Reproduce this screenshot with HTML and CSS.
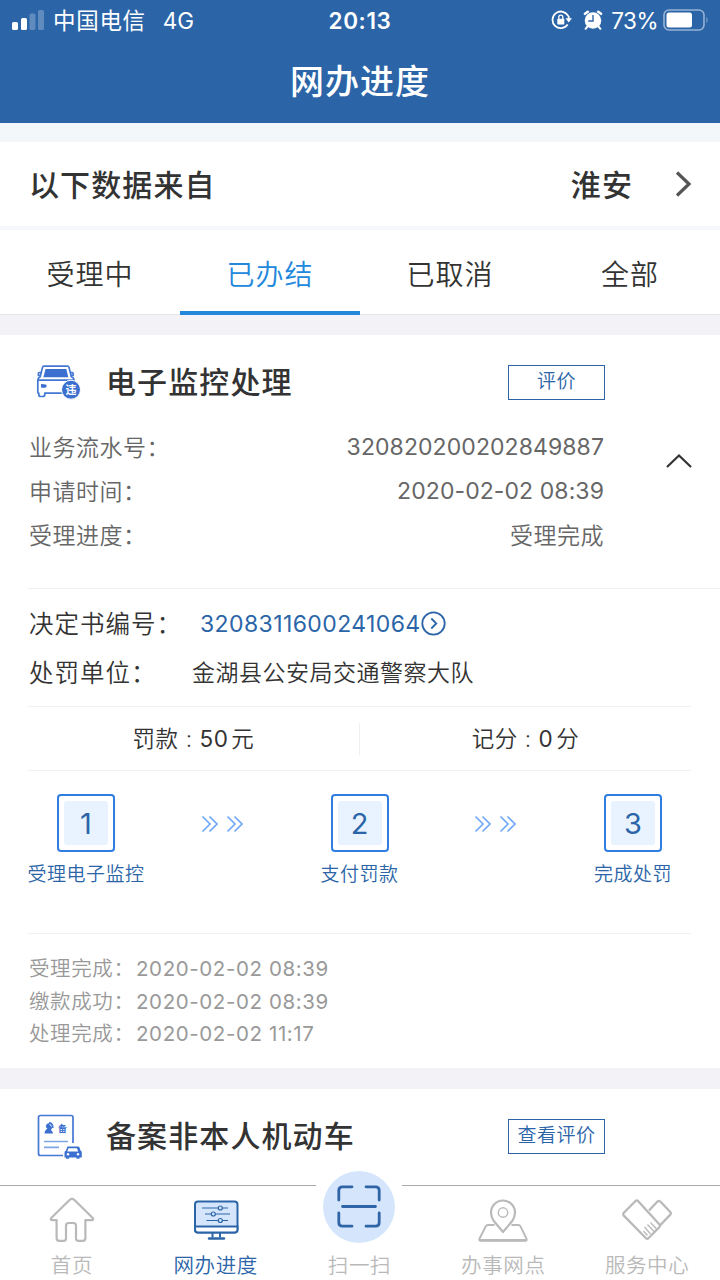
FILE: index.html
```html
<!DOCTYPE html>
<html lang="zh-CN">

<head>
  <meta charset="UTF-8" />
  <meta name="viewport" content="width=device-width, initial-scale=1.0" />
  <title>网办进度</title>
  <link rel="stylesheet" href="styles.css">
</head>

<body>
  <header class="header">
    <div class="status-bar">
      <div class="status-left">
        <svg class="signal" width="32" height="20" viewBox="0 0 32 20" fill="#fff">
          <rect x="0" y="12" width="6" height="8" rx="1.6" />
          <rect x="9" y="8" width="6" height="12" rx="1.6" />
          <rect x="17.5" y="3.500" width="6" height="16.500" rx="1.6" opacity=".25" />
          <rect x="26" y="0" width="6" height="20" rx="1.6" opacity=".25" />
        </svg>
        <span class="carrier">中国电信</span>
        <span class="network">4G</span>
      </div>
      <div class="clock">20:13</div>
      <div class="status-right">
        <svg width="22" height="20" viewBox="0 0 22 20" fill="none" stroke="#fff" stroke-width="1.8">
          <path d="M17.300 6.200A8.300 8.300 0 1 0 16.700 14.500" />
          <path d="M17.700 6v3.500" />
          <path d="M14.500 8.300h6.500l-3.300 4.200z" fill="#fff" stroke="none" />
          <rect x="6.300" y="8.700" width="7" height="5.800" rx=".8" fill="#fff" stroke="none" />
          <path d="M7.800 9V7.200a2 2 0 0 1 4 0V9" stroke-width="1.300" />
        </svg>
        <svg class="alarm" width="20" height="20" viewBox="0 0 20 20" fill="#fff">
          <circle cx="10" cy="10.500" r="8.300" />
          <path d="M2 3.800 4.800 1.800M15.200 1.800 18 3.800" stroke="#fff" stroke-width="2.600" stroke-linecap="round" />
          <path d="M4.500 16.500 2.600 18.800M15.500 16.500l1.900 2.300" stroke="#fff" stroke-width="2" stroke-linecap="round" />
          <path d="M10 5v6H5.300" fill="none" stroke="#2b65a8" stroke-width="1.400" />
        </svg>
        <span class="percent">73%</span>
        <svg class="battery" width="46" height="22" viewBox="0 0 46 22">
          <rect x="1" y="1" width="40" height="20" rx="5" fill="none" stroke="#fff" stroke-width="1.600" opacity=".5" />
          <rect x="3.500" y="3.500" width="25.500" height="15" rx="2.500" fill="#fff" />
          <path d="M43.500 7.500q2 3.500 0 7z" fill="#fff" opacity=".5" />
        </svg>
      </div>
    </div>
    <h1 class="title">网办进度</h1>
  </header>

  <main class="main">
    <div class="source">
      <span>以下数据来自</span>
      <span class="city">淮安</span>
      <svg width="17" height="28" viewBox="0 0 17 28" fill="none" stroke="#555" stroke-width="3.200">
        <path d="M2 2.500 14 14 2 25.500" />
      </svg>
    </div>

    <nav class="tabs">
      <a class="tab">受理中</a>
      <a class="tab active">已办结</a>
      <a class="tab">已取消</a>
      <a class="tab">全部</a>
    </nav>

    <section class="card">
      <div class="card-head">
        <svg class="card-icon" width="46" height="38" viewBox="0 0 46 38" fill="none" stroke="#4478d4" stroke-width="1.700" stroke-linejoin="round">
          <path d="M8 3.200h23.500q1.200 0 1.500 1.200l2.400 9.300q2.600.8 2.600 3.500v5M8 3.200q-1.200 0-1.500 1.200L4.200 13.700Q1.800 14.700 1.800 17.700v11.500q0 1 1 1V31.500q0 2 2 2h2q2 0 2-2v-1.300H28" />
          <path d="M5.500 9.500H3.200q-.8 0-.8.8v2.200h2.300M34 9.500h2.300q.8 0 .8.800v2.200h-2.300M2 17.200h35.500" />
          <path d="M9.500 6h20.800l2 8.200H7.400z" fill="#3b70d0" stroke="none" />
          <path d="M5 21l4.700.6q1 .2 1 1.200 0 2-2 2H6q-1 0-1-1z" fill="#3b70d0" stroke="none" />
          <circle cx="35" cy="26.700" r="9.500" fill="#3b70d0" stroke="#fff" stroke-width="1" />
          <text class="badge-text" x="35" y="30.700">违</text>
        </svg>
        <h2 class="card-title">电子监控处理</h2>
        <button class="btn">评价</button>
      </div>

      <div class="summary">
        <dl class="info">
          <div class="info-row"><dt>业务流水号：</dt><dd class="number">320820200202849887</dd></div>
          <div class="info-row"><dt>申请时间：</dt><dd class="number">2020-02-02 08:39</dd></div>
          <div class="info-row"><dt>受理进度：</dt><dd>受理完成</dd></div>
        </dl>
        <svg class="collapse" width="28" height="16" viewBox="0 0 28 16" fill="none" stroke="#333" stroke-width="2.200">
          <path d="M2 14 14 2.500 26 14" />
        </svg>
      </div>

      <div class="detail">
        <div class="detail-row">
          <span class="detail-label">决定书编号：</span>
          <a class="doc-link">3208311600241064</a>
          <svg width="25" height="25" viewBox="0 0 25 25" fill="none" stroke="#2b65a8" stroke-width="1.800">
            <circle cx="12.500" cy="12.500" r="11.200" />
            <path d="M10.300 7.500l5 5-5 5" />
          </svg>
        </div>
        <div class="detail-row">
          <span class="detail-label">处罚单位：</span>
          <span class="unit">金湖县公安局交通警察大队</span>
        </div>
      </div>

      <div class="penalty">
        <div class="penalty-item">罚款<i>:</i><b>50</b>元</div>
        <div class="penalty-item">记分<i>:</i><b>0</b>分</div>
      </div>

      <div class="steps">
        <div class="step">
          <div class="step-box"><span>1</span></div>
          <div class="step-name">受理电子监控</div>
        </div>
        <svg class="arrows" width="44" height="18" viewBox="0 0 44 18" fill="none" stroke="#6fa8f5" stroke-width="1.700">
          <path d="M1.500 1.500 9 9l-7.500 7.500M8.500 1.500 16 9l-7.500 7.500M26.500 1.500 34 9l-7.500 7.500M33.500 1.500 41 9l-7.500 7.500" />
        </svg>
        <div class="step">
          <div class="step-box"><span>2</span></div>
          <div class="step-name">支付罚款</div>
        </div>
        <svg class="arrows" width="44" height="18" viewBox="0 0 44 18" fill="none" stroke="#6fa8f5" stroke-width="1.700">
          <path d="M1.500 1.500 9 9l-7.500 7.500M8.500 1.500 16 9l-7.500 7.500M26.500 1.500 34 9l-7.500 7.500M33.500 1.500 41 9l-7.500 7.500" />
        </svg>
        <div class="step">
          <div class="step-box"><span>3</span></div>
          <div class="step-name">完成处罚</div>
        </div>
      </div>

      <ul class="logs">
        <li><span>受理完成：</span>2020-02-02 08:39</li>
        <li><span>缴款成功：</span>2020-02-02 08:39</li>
        <li><span>处理完成：</span>2020-02-02 11:17</li>
      </ul>
    </section>

    <section class="card">
      <div class="card-head">
        <svg class="card-icon" width="46" height="46" viewBox="0 0 46 46" fill="none" stroke="#4478d4" stroke-width="1.700">
          <path d="M27 42.500H4.500q-2 0-2-2v-36q0-2 2-2h30.500q2 0 2 2V30" />
          <path d="M8.500 20.500q.5-3.500 2.800-5l-1.500-1.500q0-3 2.500-4l4.200 5q-1.500 1-1.500 2 2 1.500 2 3.500z" fill="#3b70d0" stroke="none" />
          <path d="M13 10q3.500 0 3.800 5" stroke-width="1.800" />
          <text class="doc-text" x="26.500" y="18.500">备</text>
          <path d="M8 28.500h24M8 34.300h15" stroke="#7fa6e6" />
          <path d="M31.500 33.500h10.600q1.200 0 1.500 1.200l.9 2.800q1.300.6 1.300 2.300v4.700h-2.300v1.300h-3v-1.300h-7.400v1.300h-3v-1.300h-1.600v-4.700q0-1.700 1.600-2.300l.9-2.800q.3-1.200.5-1.200z" fill="#3b70d0" stroke="none" />
          <path d="M32.500 35.200h8.500l1.200 3.200H31.300z" fill="#fff" stroke="none" />
          <circle cx="32" cy="41.200" r="1.200" fill="#fff" stroke="none" />
          <circle cx="42" cy="41.200" r="1.200" fill="#fff" stroke="none" />
        </svg>
        <h2 class="card-title">备案非本人机动车</h2>
        <button class="btn">查看评价</button>
      </div>
    </section>
  </main>

  <footer class="tabbar">
    <a class="tabbar-item">
      <svg width="48" height="48" viewBox="0 0 48 48" fill="none" stroke="#b9b9b9" stroke-width="2.200" stroke-linejoin="round">
        <path d="M24 2.800q-1.200 0-2.200 1L3 22.300q-.8 1.500 1 1.800h4.600V42q0 2.800 2.700 2.800h4.400q2.300 0 2.300-2.300V29.600q0-2.600 2.600-2.600h4.800q2.600 0 2.600 2.600v12.900q0 2.300 2.300 2.300h4.400q2.700 0 2.700-2.800V24.100H44q1.800-.3 1-1.800L26.200 3.800q-1-1-2.200-1z" />
      </svg>
      <span>首页</span>
    </a>
    <a class="tabbar-item active">
      <svg width="48" height="48" viewBox="0 0 48 48" fill="none" stroke="#2b65a8" stroke-width="2">
        <rect x="3" y="5.500" width="42.500" height="31" rx="3" fill="#d5e6fc" />
        <path d="M3 30.500v3q0 3 3 3h36.500q3 0 3-3v-3z" fill="#fff" />
        <path d="M20.500 37v4.500M28 37v4.500" />
        <path d="M17 42.500h15" stroke-width="2.400" stroke-linecap="round" />
        <path d="M10 12h26M13 18h25M14.500 24.500H36" stroke-width="1.200" />
        <g fill="#d5e6fc" stroke-width="1.200">
          <circle cx="28.300" cy="12" r="2" />
          <circle cx="21.300" cy="18" r="2" />
          <circle cx="28.300" cy="24.500" r="2" />
        </g>
      </svg>
      <span>网办进度</span>
    </a>
    <a class="tabbar-item">
      <div class="scan">
        <svg width="44" height="44" viewBox="0 0 44 44" fill="none" stroke="#2f64a6" stroke-width="2.800" stroke-linecap="round">
          <path d="M1.800 15V5.500q0-3.700 3.700-3.700h9.500M29 1.800h9.500q3.700 0 3.700 3.700V15M1.800 28v9.500q0 3.700 3.700 3.700h9.500M29 41.200h9.500q3.700 0 3.700-3.700V28M5.500 21.500h33" />
        </svg>
      </div>
      <span>扫一扫</span>
    </a>
    <a class="tabbar-item">
      <svg width="50" height="48" viewBox="0 0 50 48" fill="none" stroke="#b9b9b9" stroke-width="2.200" stroke-linejoin="round">
        <path d="M16.500 29H9.800q-1.300 0-2 1.200L1.600 42.500q-1 2.300 1.300 2.300h44.200q2.300 0 1.300-2.300l-6-12.300q-.7-1.200-2-1.200h-7" stroke-width="1.900" />
        <path d="M1.800 44.200h46.400" />
        <path d="M25 36 15.800 25Q13 21 13 16.500a12 12 0 0 1 24 0q0 4.500-2.800 8.500z" />
        <circle cx="25" cy="16.500" r="4.700" stroke-width="1.400" />
      </svg>
      <span>办事网点</span>
    </a>
    <a class="tabbar-item">
      <svg width="52" height="48" viewBox="0 0 52 48" fill="none" stroke="#b9b9b9" stroke-width="2.300" stroke-linejoin="round">
        <path d="M14.500 5 2.600 17q-1 1.200 0 2.400L25 42.300q1.200 1 2.400 0L38.500 31q1-1.200 0-2.400L17 5q-1.200-1-2.500 0z" />
        <path d="M28 14.500 36.500 5.500q1.400-1.300 2.800 0l10 10.500q1.200 1.300 0 2.600L39 29.500" />
        <path d="M26.500 28.500l6.500 7M29.500 26.500l6.500 7M23.500 31l6 7M22.500 35l4 4.500" stroke-width="1.300" />
      </svg>
      <span>服务中心</span>
    </a>
  </footer>
</body>

</html>
```

FILE: styles.css
```css
:root {
  --blue: #2b65a8;
  --tab-blue: #2288dc;
  --icon-blue: #3b70d0;
  --text: #333;
  --text-mid: #666;
  --text-light: #999;
  --line: #f0f0f0;
  --bg: #f2f2f7;
}

* {
  box-sizing: border-box;
  margin: 0;
  padding: 0;
}

body {
  display: flex;
  flex-direction: column;
  height: 1280px;
  overflow: hidden;
  font-family: Inter, 'Noto Sans CJK SC', sans-serif;
  font-size: 23px;
  font-weight: 350;
  color: var(--text);
  background: #fff;
}

svg {
  display: block;
  flex: none;
}

/* header */
.header {
  flex: none;
  height: 123px;
  color: #fff;
  background: var(--blue);
}

.status-bar {
  display: grid;
  grid-template-columns: 1fr auto 1fr;
  align-items: center;
  height: 38px;
  padding: 0 12px;
  font-weight: 400;
  line-height: 38px;
}

.status-left,
.status-right {
  display: flex;
  align-items: center;
}

.status-right {
  justify-content: flex-end;
}

.carrier {
  margin: 2px 0 0 9px;
  font-size: 22.5px;
  letter-spacing: 0.7px;
}

.network {
  margin: 2px 0 0 17px;
  font-size: 22.5px;
}

.clock {
  padding-top: 2px;
  font-size: 22.5px;
  font-weight: 600;
  letter-spacing: 0.6px;
}

.alarm {
  margin-left: 10px;
}

.percent {
  margin: 2px 0 0 8px;
  font-size: 22.5px;
  letter-spacing: -0.5px;
}

.battery {
  margin: 0 -1px 0 5px;
}

.title {
  font-size: 34px;
  font-weight: 500;
  line-height: 88px;
  letter-spacing: 1px;
  text-align: center;
}

/* list */
.main {
  flex: 1;
  min-height: 0;
  overflow: hidden;
  background: var(--bg);
}

.source {
  display: flex;
  align-items: center;
  height: 107px;
  padding: 0 28px 0 29px;
  font-size: 30px;
  font-weight: 500;
  letter-spacing: 1.1px;
  background: #fff;
  border-top: 19px solid #f3f7fa;
  border-bottom: 4px solid #f5f7fa;
}

.source span {
  padding-bottom: 3px;
}

.city {
  margin: 0 42px 0 auto;
}

.tabs {
  display: flex;
  height: 85px;
  background: #fff;
  border-bottom: 1px solid #e3e3e8;
}

.tab {
  flex: 1;
  height: 85px;
  font-size: 28px;
  line-height: 90px;
  letter-spacing: 1px;
  text-align: center;
}

.tab.active {
  color: var(--tab-blue);
  border-bottom: 4px solid var(--tab-blue);
}

.card {
  margin-top: 20px;
  padding-left: 28px;
  background: #fff;
}

.card + .card {
  height: 200px;
  margin-top: 21px;
}

.card-head {
  display: flex;
  align-items: center;
  height: 94px;
  padding: 0 115px 0 8px;
}

.card-title {
  margin-left: 24px;
  padding-bottom: 4px;
  font-size: 30px;
  font-weight: 500;
  letter-spacing: 1.1px;
}

.btn {
  width: 97px;
  height: 35px;
  margin-left: auto;
  font-family: inherit;
  font-size: 19px;
  font-weight: inherit;
  line-height: 32px;
  letter-spacing: 0.5px;
  color: var(--blue);
  background: #fff;
  border: 1px solid var(--blue);
}

.badge-text,
.doc-text {
  font-size: 11px;
  font-weight: 700;
  text-anchor: middle;
  fill: #fff;
  stroke: none;
}

.doc-text {
  font-size: 9px;
  fill: var(--icon-blue);
}

.summary {
  display: flex;
  height: 160px;
  padding-left: 1px;
  color: var(--text-mid);
  border-bottom: 1px solid var(--line);
}

.info {
  width: 575px;
  margin-top: -3px;
}

.info-row {
  display: flex;
  justify-content: space-between;
  height: 44px;
  line-height: 44px;
  letter-spacing: 0.5px;
}

.info-row .number {
  font-weight: 400;
  line-height: 43px;
  letter-spacing: 0.08px;
}

.collapse {
  margin: 24px 0 0 61px;
}

.detail {
  height: 118px;
  margin-right: 29px;
  padding-top: 10px;
  border-bottom: 1px solid var(--line);
}

.detail-row {
  display: flex;
  align-items: center;
  height: 49px;
}

.detail-label {
  width: 172px;
  padding: 0 0 3px 1px;
  font-size: 24.5px;
  letter-spacing: 1px;
  white-space: nowrap;
}

.detail-row + .detail-row .detail-label {
  width: 164px;
}

.doc-link {
  font-weight: 400;
  letter-spacing: 0.4px;
  color: var(--blue);
}

.unit {
  padding-bottom: 3px;
  letter-spacing: 0.5px;
}

.penalty {
  display: flex;
  align-items: center;
  height: 64px;
  margin-right: 29px;
  border-bottom: 1px solid var(--line);
}

.penalty-item {
  flex: 1;
  height: 32px;
  font-size: 22.5px;
  line-height: 32px;
  letter-spacing: 0.5px;
  text-align: center;
}

.penalty-item + .penalty-item {
  border-left: 1px solid var(--line);
}

.penalty-item i {
  margin: 0 7px;
  font-style: normal;
}

.penalty-item b {
  margin-right: 3px;
  font-weight: 400;
}

.steps {
  display: flex;
  justify-content: space-between;
  height: 163px;
  margin-right: 29px;
  padding-top: 23px;
  border-bottom: 1px solid var(--line);
}

.step {
  display: flex;
  flex-direction: column;
  align-items: center;
  width: 116px;
  color: var(--blue);
}

.step-box {
  width: 58px;
  height: 58px;
  padding: 5px;
  border: 2px solid #2f7de1;
  border-radius: 4px;
}

.step-box span {
  display: block;
  height: 44px;
  font-size: 29px;
  font-weight: 400;
  line-height: 45px;
  text-align: center;
  background: #e8f3ff;
  border-radius: 3px;
}

.step-name {
  margin-top: 9px;
  font-size: 19px;
  line-height: 28px;
  letter-spacing: 0.5px;
  white-space: nowrap;
}

.arrows {
  margin-top: 21px;
}

.logs {
  height: 134px;
  padding: 19px 0 0 1px;
  font-size: 20.5px;
  font-weight: 400;
  line-height: 32.6px;
  letter-spacing: 0.6px;
  color: var(--text-light);
  list-style: none;
}

.logs li {
  display: flex;
}

.logs span {
  width: 107px;
  font-weight: 350;
}

/* bottom bar */
.tabbar {
  display: flex;
  flex: none;
  height: 95px;
  padding-right: 1px;
  background: #fff;
  border-top: 1px solid #aaa;
}

.tabbar-item {
  display: flex;
  flex: 1;
  flex-direction: column;
  align-items: center;
  padding-top: 10px;
  font-size: 20.5px;
  color: #b9b9b9;
}

.tabbar-item span {
  margin-top: 8px;
  line-height: 28px;
  letter-spacing: 0.6px;
}

.tabbar-item.active {
  color: var(--blue);
}

/* the scan button rises above the bar and cuts its top line */
.scan {
  display: flex;
  align-items: center;
  justify-content: center;
  width: 72px;
  height: 72px;
  margin: -25px 0 1px;
  background: #d5e6fc;
  border-radius: 50%;
  box-shadow: 0 0 0 12px #fff;
}
```
